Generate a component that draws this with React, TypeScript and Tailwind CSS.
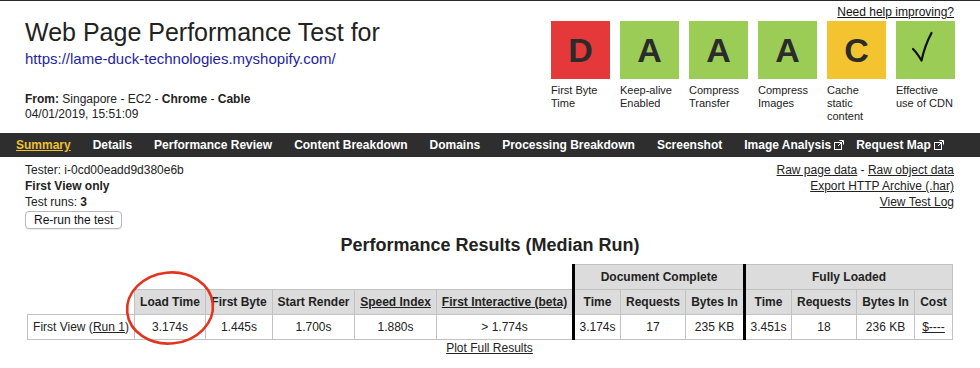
const grades = [
  { letter: 'D', bg: 'bg-[#e4383a]', label: ['First Byte', 'Time'] },
  { letter: 'A', bg: 'bg-[#9bcd56]', label: ['Keep-alive', 'Enabled'] },
  { letter: 'A', bg: 'bg-[#9bcd56]', label: ['Compress', 'Transfer'] },
  { letter: 'A', bg: 'bg-[#9bcd56]', label: ['Compress', 'Images'] },
  { letter: 'C', bg: 'bg-[#f3c42f]', label: ['Cache', 'static', 'content'] },
  { letter: '', bg: 'bg-[#9bcd56]', label: ['Effective', 'use of CDN'] },
];

const navItems = [
  { name: 'Summary', active: true },
  { name: 'Details' },
  { name: 'Performance Review' },
  { name: 'Content Breakdown' },
  { name: 'Domains' },
  { name: 'Processing Breakdown' },
  { name: 'Screenshot' },
  { name: 'Image Analysis', ext: true },
  { name: 'Request Map', ext: true },
];

function ExtIcon() {
  return (
    <svg width="10" height="10" viewBox="0 0 10 10" className="ml-[3px]" fill="none" stroke="white" strokeWidth="1">
      <rect x="0.5" y="2.5" width="7" height="7" />
      <path d="M4 6 L9 1 M5.5 0.5 H9.5 V4.5" />
    </svg>
  );
}

function Check() {
  return (
    <svg width="59" height="58" viewBox="0 0 59 58">
      <path d="M17 28 Q21 32 25.5 39.5 Q29 24 35.5 12" fill="none" stroke="#111" strokeWidth="2.2" strokeLinecap="round" strokeLinejoin="round" />
    </svg>
  );
}

const th = 'border border-[#c2c2c2] bg-[#dcdcdc] font-bold h-[25px] p-0 text-center';
const td = 'border border-[#c2c2c2] h-[25px] p-0 text-center';
const thick = 'border-l-[3px] border-l-black';

export default function App() {
  return (
    <div className="w-[980px] h-[368px] overflow-hidden bg-white text-[#222] text-[12px] font-['Liberation_Sans',Arial,sans-serif] border-t border-[#2a2a2a]">
      {/* Header */}
      <div className="flex justify-between pl-[25px] pr-[25px] h-[132px]">
        <div className="pt-[15px]">
          <h1 className="text-[25px] leading-[32px] text-[#222]">Web Page Performance Test for</h1>
          <a className="block mt-[2px] text-[15px] leading-[18px] text-[#1f1f9e]">https://lame-duck-technologies.myshopify.com/</a>
          <div className="mt-[24px] leading-[15px]">
            <b>From:</b> Singapore - EC2 - <b>Chrome</b> - <b>Cable</b>
          </div>
          <div className="leading-[15px]">04/01/2019, 15:51:09</div>
        </div>
        <div className="flex flex-col items-end pt-[4px]">
          <a className="underline leading-[14px] mr-[1px] text-[#111]">Need help improving?</a>
          <div className="flex gap-[10px] mt-[2px]">
            {grades.map((g, i) => (
              <div key={i} className="w-[59px]">
                <div className={`${g.bg} h-[58px] flex items-center justify-center text-[34px] font-bold text-[#2b2b2b]`}>
                  {g.letter ? g.letter : <Check />}
                </div>
                <div className="mt-[5px] text-[11px] leading-[13px] text-[#222]">
                  {g.label.map((l) => (
                    <div key={l}>{l}</div>
                  ))}
                </div>
              </div>
            ))}
          </div>
        </div>
      </div>

      {/* Nav */}
      <div className="bg-[#2e2e2e] h-[24px] flex items-center pl-[5px]">
        {navItems.map((n) => (
          <div key={n.name} className={`pl-[11px] ${n.ext ? 'pr-[1px]' : 'pr-[11px]'} flex items-center font-bold text-[12px] leading-[24px]`}>
            <span className={n.active ? 'text-[#f0c02e] underline' : 'text-white'}>{n.name}</span>
            {n.ext && <ExtIcon />}
          </div>
        ))}
      </div>

      {/* Test info */}
      <div className="flex justify-between pl-[25px] pr-[26px] pt-[5px]">
        <div className="leading-[16px]">
          <div>Tester: i-0cd00eadd9d380e6b</div>
          <div className="font-bold">First View only</div>
          <div>
            Test runs: <b>3</b>
          </div>
          <button className="mt-[1px] h-[18px] px-[8px] bg-white border border-[#b8b8b8] rounded-[4px] text-[12px] leading-[16px] text-[#111] shadow-[0_1px_1px_rgba(0,0,0,0.08)]">
            Re-run the test
          </button>
        </div>
        <div className="leading-[16px] text-right">
          <div>
            <a className="underline">Raw page data</a> - <a className="underline">Raw object data</a>
          </div>
          <div>
            <a className="underline">Export HTTP Archive (.har)</a>
          </div>
          <div>
            <a className="underline">View Test Log</a>
          </div>
        </div>
      </div>

      {/* Results */}
      <h2 className="text-center font-bold text-[18px] leading-[22px] mt-[5px] text-[#222]">Performance Results (Median Run)</h2>
      <div className="relative w-[925px] ml-[27px] mt-[8px]">
        <table className="table-fixed border-collapse w-[925px]">
          <colgroup>
            <col className="w-[107px]" />
            <col className="w-[71px]" />
            <col className="w-[67px]" />
            <col className="w-[82px]" />
            <col className="w-[82px]" />
            <col className="w-[137px]" />
            <col className="w-[47px]" />
            <col className="w-[65px]" />
            <col className="w-[59px]" />
            <col className="w-[47px]" />
            <col className="w-[65px]" />
            <col className="w-[58px]" />
            <col className="w-[38px]" />
          </colgroup>
          <thead>
            <tr>
              <th colSpan={6} className="p-0 h-[25px]"></th>
              <th colSpan={3} className={`${th} ${thick}`}>Document Complete</th>
              <th colSpan={4} className={`${th} ${thick}`}>Fully Loaded</th>
            </tr>
            <tr>
              <th className="p-0 h-[25px]"></th>
              <th className={th}>Load Time</th>
              <th className={th}>First Byte</th>
              <th className={th}>Start Render</th>
              <th className={th}><a className="underline">Speed Index</a></th>
              <th className={th}><a className="underline">First Interactive (beta)</a></th>
              <th className={`${th} ${thick}`}>Time</th>
              <th className={th}>Requests</th>
              <th className={th}>Bytes In</th>
              <th className={`${th} ${thick}`}>Time</th>
              <th className={th}>Requests</th>
              <th className={th}>Bytes In</th>
              <th className={th}>Cost</th>
            </tr>
          </thead>
          <tbody>
            <tr>
              <td className={td}>
                First View (<a className="underline">Run 1</a>)
              </td>
              <td className={td}>3.174s</td>
              <td className={td}>1.445s</td>
              <td className={td}>1.700s</td>
              <td className={td}>1.880s</td>
              <td className={td}>&gt; 1.774s</td>
              <td className={`${td} ${thick}`}>3.174s</td>
              <td className={td}>17</td>
              <td className={td}>235 KB</td>
              <td className={`${td} ${thick}`}>3.451s</td>
              <td className={td}>18</td>
              <td className={td}>236 KB</td>
              <td className={td}><a className="underline">$----</a></td>
            </tr>
          </tbody>
        </table>
        <svg className="absolute left-[95px] top-[3px] pointer-events-none" width="96" height="82" viewBox="0 0 96 82">
          <ellipse cx="48" cy="41" rx="43" ry="35.5" fill="none" stroke="#e2351f" strokeWidth="2.6" transform="rotate(-6 48 41)" />
        </svg>
        <div className="text-center leading-[16px]">
          <a className="underline">Plot Full Results</a>
        </div>
      </div>
    </div>
  );
}
